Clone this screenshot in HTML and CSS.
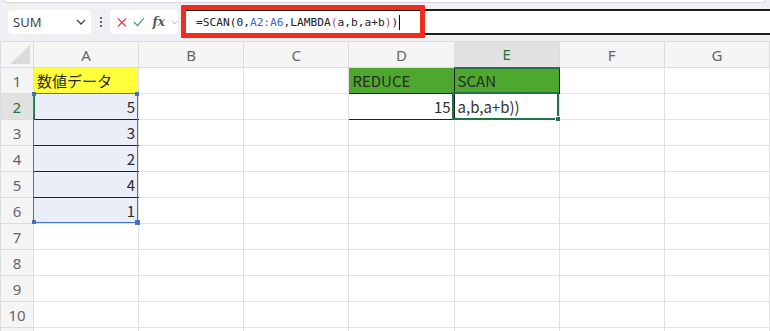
FILE: index.html
```html
<!DOCTYPE html>
<html lang="ja">
<head>
    <meta charset="UTF-8">
    <title>SCAN</title>
    <link rel="stylesheet" href="styles.css">
</head>
<body>
    <div class="ribbon-edge"></div>
    <div class="formula-bar">
        <div class="name-box">
            <span>SUM</span>
            <svg width="10" height="6" viewBox="0 0 10 6"><path d="M1 1l4 4 4-4" fill="none" stroke="#444" stroke-width="1.3"/></svg>
        </div>
        <div class="more-dots"><i></i><i></i><i></i></div>
        <div class="fx-box">
            <svg width="11" height="11" viewBox="0 0 11 11"><path d="M1 1l9 9M10 1l-9 9" stroke="#e0463c" stroke-width="1.3"/></svg>
            <svg width="13" height="10" viewBox="0 0 13 10"><path d="M1 5l4 4 7-8" fill="none" stroke="#3a9a52" stroke-width="1.3"/></svg>
            <span class="fx">fx</span>
            <svg width="8" height="5" viewBox="0 0 8 5"><path d="M1 1l3 3 3-3" fill="none" stroke="#aaa" stroke-width="1.1"/></svg>
        </div>
        <div class="formula-input">
            <div class="formula-text">=SCAN(0,<span class="ref">A2:A6</span>,LAMBDA<span class="paren">(</span>a,b,a+b<span class="paren">)</span>)<span class="caret"></span></div>
        </div>
        <div class="callout"></div>
    </div>

    <div class="sheet">
        <table class="grid">
            <colgroup>
                <col class="c-head"><col><col><col><col><col><col><col>
            </colgroup>
            <tr class="col-heads">
                <th class="corner"><span class="tri"></span></th>
                <th>A</th><th>B</th><th>C</th><th>D</th><th class="active">E</th><th>F</th><th>G</th>
            </tr>
            <tr>
                <th>1</th>
                <td class="yellow">数値データ</td><td></td><td></td>
                <td class="green boxed">REDUCE</td><td class="green boxed">SCAN</td><td></td><td></td>
            </tr>
            <tr>
                <th class="active">2</th>
                <td class="num blue line">5</td><td></td><td></td>
                <td class="num boxed">15</td><td class="editing">a,b,a+b))</td><td></td><td></td>
            </tr>
            <tr>
                <th>3</th>
                <td class="num blue line">3</td><td></td><td></td><td></td><td></td><td></td><td></td>
            </tr>
            <tr>
                <th>4</th>
                <td class="num blue line">2</td><td></td><td></td><td></td><td></td><td></td><td></td>
            </tr>
            <tr>
                <th>5</th>
                <td class="num blue line">4</td><td></td><td></td><td></td><td></td><td></td><td></td>
            </tr>
            <tr>
                <th>6</th>
                <td class="num blue">1</td><td></td><td></td><td></td><td></td><td></td><td></td>
            </tr>
            <tr><th>7</th><td></td><td></td><td></td><td></td><td></td><td></td><td></td></tr>
            <tr><th>8</th><td></td><td></td><td></td><td></td><td></td><td></td><td></td></tr>
            <tr><th>9</th><td></td><td></td><td></td><td></td><td></td><td></td><td></td></tr>
            <tr><th>10</th><td></td><td></td><td></td><td></td><td></td><td></td><td></td></tr>
            <tr><th></th><td></td><td></td><td></td><td></td><td></td><td></td><td></td></tr>
        </table>

        <div class="range-ref">
            <i class="h tl"></i><i class="h tr"></i><i class="h bl"></i><i class="h br"></i>
        </div>
        <div class="active-cell"><i class="fill-handle"></i></div>
    </div>
</body>
</html>
```

FILE: styles.css
```css
body {
    margin: 0;
    background: #eef0f3;
    font-family: "Noto Sans", "Noto Sans CJK JP", sans-serif;
    overflow: hidden;
}
.ribbon-edge {
    height: 2px;
    margin: 0 4px;
    background: #fff;
    border: 1px solid #d6d8db;
    border-top: none;
    border-radius: 0 0 6px 6px;
}
.formula-bar {
    position: relative;
    display: flex;
    align-items: center;
    height: 38px;
}
.name-box {
    display: flex;
    align-items: center;
    justify-content: space-between;
    box-sizing: border-box;
    width: 83px;
    height: 24px;
    margin-left: 8px;
    padding: 0 5px 0 5px;
    background: #fff;
    border-radius: 4px;
    font-size: 13px;
    color: #444;
}
.more-dots {
    display: flex;
    flex-direction: column;
    gap: 2px;
    width: 19px;
    align-items: center;
}
.more-dots i {
    width: 2px;
    height: 2px;
    background: #333;
    border-radius: 1px;
}
.fx-box {
    display: flex;
    align-items: center;
    gap: 6px;
    box-sizing: border-box;
    width: 68px;
    height: 24px;
    padding-left: 7px;
    background: #fff;
    border-radius: 4px;
}
.fx-box .fx {
    font-family: "DejaVu Serif", serif;
    font-style: italic;
    font-weight: bold;
    font-size: 12px;
    color: #555;
    margin-left: 2px;
}
.formula-input {
    flex: 1;
    display: flex;
    align-items: center;
    height: 22px;
    margin-left: 3px;
    background: #fff;
    border-top: 2px solid #1e1e1e;
    border-bottom: 2px solid #1e1e1e;
}
.formula-text {
    padding-left: 15px;
    font-family: "DejaVu Sans Mono", monospace;
    font-size: 11.2px;
    color: #222;
    display: flex;
    align-items: center;
}
.formula-text .ref { color: #3569c9; }
.formula-text .paren { color: #b5408d; }
.caret {
    display: inline-block;
    width: 1px;
    height: 15px;
    margin-left: 1px;
    background: #111;
}
.callout {
    position: absolute;
    left: 181px;
    top: 2px;
    width: 234px;
    height: 23px;
    border: 5px solid #f22b1c;
    border-radius: 1px;
}

.sheet {
    position: relative;
    background: #fff;
}
.grid {
    table-layout: fixed;
    border-collapse: collapse;
    width: 770px;
    font-family: "Noto Sans CJK JP", sans-serif;
    font-size: 15px;
    color: #2a2a2a;
}
.grid col { width: 105px; }
.grid col.c-head { width: 33px; }
.grid tr { height: 26px; }
.grid th {
    padding: 0;
    background: #f5f5f5;
    border: 1px solid #dcdcdc;
    font-family: "Noto Sans", sans-serif;
    font-weight: normal;
    font-size: 15px;
    color: #666;
    line-height: 24px;
}
.grid th.active {
    background: #e1e1e1;
    color: #217346;
}
.col-heads th.active { border-bottom: 2px solid #217346; }
tr th.active:first-child { border-right: 2px solid #217346; }
.corner { position: relative; }
.tri {
    position: absolute;
    right: 3px;
    bottom: 3px;
    border-left: 20px solid transparent;
    border-bottom: 19px solid #dcdcdc;
}
.grid td {
    padding: 0 3px;
    border: 1px solid #e1e1e1;
    line-height: 24px;
    white-space: nowrap;
    overflow: hidden;
}
.grid td.num { text-align: right; }
.yellow { background: #ffff3a; }
.green { background: #4ea72e; }
.blue { background: #e9eef8; }
.grid td.line { border-bottom-color: #222; }
.grid td.boxed { border-color: #222; }
.grid td.editing { color: #333; }

.range-ref {
    position: absolute;
    left: 33px;
    top: 52px;
    width: 103px;
    height: 128px;
    border: 1px solid #4472c4;
}
.range-ref .h {
    position: absolute;
    width: 4px;
    height: 4px;
    background: #4472c4;
}
.range-ref .tl { left: -2px; top: -2px; }
.range-ref .tr { right: -2px; top: -2px; }
.range-ref .bl { left: -2px; bottom: -2px; }
.range-ref .br { right: -3px; bottom: -3px; width: 5px; height: 5px; }
.active-cell {
    position: absolute;
    left: 452px;
    top: 51px;
    width: 103px;
    height: 24px;
    border: 2px solid #217346;
}
.fill-handle {
    position: absolute;
    right: -4px;
    bottom: -4px;
    width: 4px;
    height: 4px;
    background: #217346;
    border: 1px solid #fff;
}
```
